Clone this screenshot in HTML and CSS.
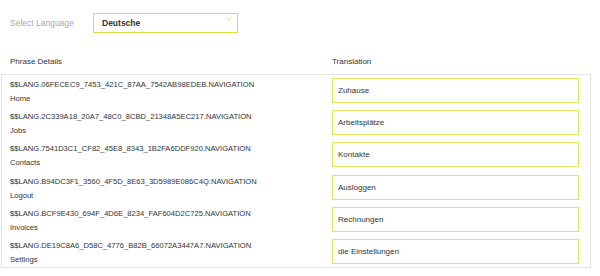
FILE: index.html
```html
<!DOCTYPE html>
<html>
<head>
<meta charset="utf-8">
<link rel="stylesheet" href="styles.css">
</head>
<body>
<div class="page">
  <div class="lang-row">
    <span class="lang-label">Select Language</span>
    <div class="select">
      <span>Deutsche</span>
      <svg class="chev" width="6" height="4" viewBox="0 0 6 4"><path d="M0.5 0.5 L3 3 L5.5 0.5" fill="none" stroke="#e3e87c" stroke-width="1"/></svg>
    </div>
  </div>
  <div class="heads">
    <span class="h-phrase">Phrase Details</span>
    <span class="h-trans">Translation</span>
  </div>
  <div class="panel">
    <div class="row"><div class="phrase"><div>$$LANG.06FECEC9_7453_421C_87AA_7542AB98EDEB.NAVIGATION</div><div>Home</div></div><div class="input">Zuhause</div></div>
    <div class="row"><div class="phrase"><div>$$LANG.2C339A18_20A7_48C0_8CBD_21348A5EC217.NAVIGATION</div><div>Jobs</div></div><div class="input">Arbeitsplätze</div></div>
    <div class="row"><div class="phrase"><div>$$LANG.7541D3C1_CF82_45E8_8343_1B2FA6DDF920.NAVIGATION</div><div>Contacts</div></div><div class="input">Kontakte</div></div>
    <div class="row"><div class="phrase"><div>$$LANG.B94DC3F1_3560_4F5D_8E63_3D5989E086C4Q.NAVIGATION</div><div>Logout</div></div><div class="input">Ausloggen</div></div>
    <div class="row"><div class="phrase"><div>$$LANG.BCF9E430_694F_4D6E_8234_FAF604D2C725.NAVIGATION</div><div>Invoices</div></div><div class="input">Rechnungen</div></div>
    <div class="row"><div class="phrase"><div>$$LANG.DE19C8A6_D58C_4776_B82B_66072A3447A7.NAVIGATION</div><div>Settings</div></div><div class="input">die Einstellungen</div></div>
  </div>
</div>
</body>
</html>
```
FILE: styles.css
```css
html, body {
  margin: 0;
  padding: 0;
  background: #fff;
}
body {
  font-family: "Liberation Sans", Arial, sans-serif;
  color: #333;
  font-size: 8px;
}
.page {
  width: 600px;
  height: 276px;
  padding-top: 13px;
  box-sizing: border-box;
}
.lang-row {
  display: flex;
  align-items: center;
  padding-left: 10px;
  height: 20px;
}
.lang-label {
  width: 83px;
  color: #a8a8a8;
  font-size: 8.5px;
}
.select {
  position: relative;
  width: 145px;
  height: 20px;
  box-sizing: border-box;
  border: 1px solid #d8e03c;
  display: flex;
  align-items: center;
  padding-left: 8px;
  font-size: 8.5px;
  font-weight: bold;
  color: #333;
}
.chev {
  position: absolute;
  right: 5px;
  top: 3px;
}
.heads {
  display: flex;
  margin-top: 23px;
  height: 12px;
  line-height: 12px;
  font-size: 8px;
  color: #333;
}
.h-phrase {
  padding-left: 10px;
  width: 322px;
}
.panel {
  margin-top: 6px;
  margin-left: 1px;
  width: 590px;
  box-sizing: border-box;
  border: 1px solid #e3e3e3;
  padding: 3px 11px 3px 8px;
  display: flex;
  flex-direction: column;
  gap: 7.2px;
}
.row {
  display: flex;
  height: 25px;
}
.phrase {
  flex: 1;
  line-height: 14px;
  font-size: 7.6px;
  color: #333;
}
.input {
  width: 247px;
  height: 25px;
  box-sizing: border-box;
  border: 1px solid #dfe55c;
  display: flex;
  align-items: center;
  padding-left: 5px;
  font-size: 8px;
  color: #333;
}
```
